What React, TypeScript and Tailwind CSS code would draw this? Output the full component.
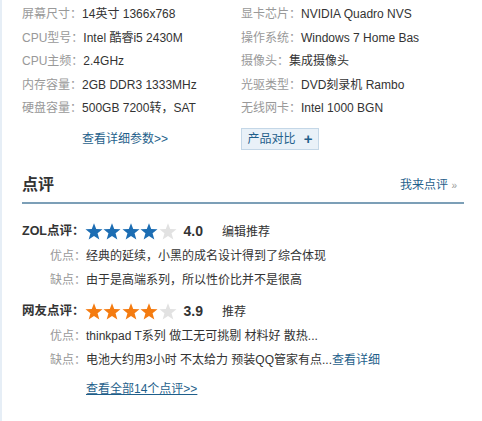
import React from 'react';

const font = { fontFamily: '"Liberation Sans", "Noto Sans CJK SC", sans-serif' };

const specsLeft: [string, string][] = [
  ['屏幕尺寸', '14英寸 1366x768'],
  ['CPU型号', 'Intel 酷睿i5 2430M'],
  ['CPU主频', '2.4GHz'],
  ['内存容量', '2GB DDR3 1333MHz'],
  ['硬盘容量', '500GB 7200转，SAT'],
];

const specsRight: [string, string][] = [
  ['显卡芯片', 'NVIDIA Quadro NVS'],
  ['操作系统', 'Windows 7 Home Bas'],
  ['摄像头', '集成摄像头'],
  ['光驱类型', 'DVD刻录机 Rambo'],
  ['无线网卡', 'Intel 1000 BGN'],
];

function Star({ color }: { color: string }) {
  return (
    <svg width="18" height="17" viewBox="0 0 24 23" className="shrink-0">
      <polygon
        points="12,0.5 15,8.2 23.5,8.6 16.8,13.9 19.2,22.3 12,17.5 4.8,22.3 7.2,13.9 0.5,8.6 9,8.2"
        fill={color}
      />
    </svg>
  );
}

function Stars({ filled, color }: { filled: number; color: string }) {
  return (
    <div className="flex items-center gap-[0.5px]">
      {[0, 1, 2, 3, 4].map((i) => (
        <Star key={i} color={i < filled ? color : '#e2e2e2'} />
      ))}
    </div>
  );
}

function SpecRow({ label, value }: { label: string; value: string }) {
  return (
    <div className="h-[23.5px] leading-[23.5px] whitespace-nowrap">
      <span className="text-[#999]">{label}：</span>
      <span className="text-[#333]">{value}</span>
    </div>
  );
}

function Review({
  title,
  score,
  tag,
  filled,
  color,
  pros,
  cons,
  consMore,
}: {
  title: string;
  score: string;
  tag: string;
  filled: number;
  color: string;
  pros: string;
  cons: string;
  consMore?: boolean;
}) {
  return (
    <div>
      <div className="flex items-center h-[24px]">
        <span className="font-bold text-[#333] text-[12.5px]">{title}：</span>
        <Stars filled={filled} color={color} />
        <span className="ml-[7px] font-bold text-[#333] text-[14px]">{score}</span>
        <span className="ml-[19px] text-[#333]">{tag}</span>
      </div>
      <div className="pl-[28px] h-[24px] leading-[24px] whitespace-nowrap">
        <span className="text-[#999]">优点：</span>
        <span className="text-[#333]">{pros}</span>
      </div>
      <div className="pl-[28px] h-[24px] leading-[24px] whitespace-nowrap">
        <span className="text-[#999]">缺点：</span>
        <span className="text-[#333]">{cons}</span>
        {consMore && <a className="text-[#1f5f8b]">查看详细</a>}
      </div>
    </div>
  );
}

export default function App() {
  return (
    <div className="w-[482px] h-[421px] bg-white flex text-[12px] overflow-hidden" style={font}>
      <div className="w-[2px] bg-[#e6eef6] shrink-0" />
      <div className="flex-1 pl-[20px] pr-[18px]">
        {/* Spec table */}
        <div className="grid grid-cols-[219px_1fr] pt-[3px]">
          <div>
            {specsLeft.map(([l, v]) => (
              <SpecRow key={l} label={l} value={v} />
            ))}
          </div>
          <div>
            {specsRight.map(([l, v]) => (
              <SpecRow key={l} label={l} value={v} />
            ))}
          </div>
        </div>

        <div className="grid grid-cols-[219px_1fr] mt-[7px] items-center">
          <a className="pl-[60px] text-[#1f5f8b]">查看详细参数&gt;&gt;</a>
          <div>
            <button className="h-[22px] w-[78px] bg-[#e9f1f8] border border-[#c4d7e7] text-[#1f5f8b] flex items-center justify-center gap-[8px]">
              <span>产品对比</span>
              <span className="font-bold text-[15px] leading-none">+</span>
            </button>
          </div>
        </div>

        {/* Review header */}
        <div className="mt-[25px] flex items-end justify-between border-b-2 border-[#7c9fb7] pb-[7px]">
          <h2 className="text-[16px] font-bold text-[#333] leading-[20px]">点评</h2>
          <a className="text-[#1f5f8b] text-[12px] mr-[7px] leading-[18px]">
            我来点评 <span className="text-[10px] text-[#999]">»</span>
          </a>
        </div>

        <div className="mt-[16px]">
          <Review
            title="ZOL点评"
            score="4.0"
            tag="编辑推荐"
            filled={4}
            color="#1c6db3"
            pros="经典的延续，小黑的成名设计得到了综合体现"
            cons="由于是高端系列，所以性价比并不是很高"
          />
        </div>
        <div className="mt-[8px]">
          <Review
            title="网友点评"
            score="3.9"
            tag="推荐"
            filled={4}
            color="#f47b10"
            pros="thinkpad T系列 做工无可挑剔 材料好 散热..."
            cons="电池大约用3小时 不太给力 预装QQ管家有点..."
            consMore
          />
        </div>
        <div className="mt-[8px] pl-[64px]">
          <a className="text-[#1f5f8b] underline">查看全部14个点评&gt;&gt;</a>
        </div>
      </div>
    </div>
  );
}
